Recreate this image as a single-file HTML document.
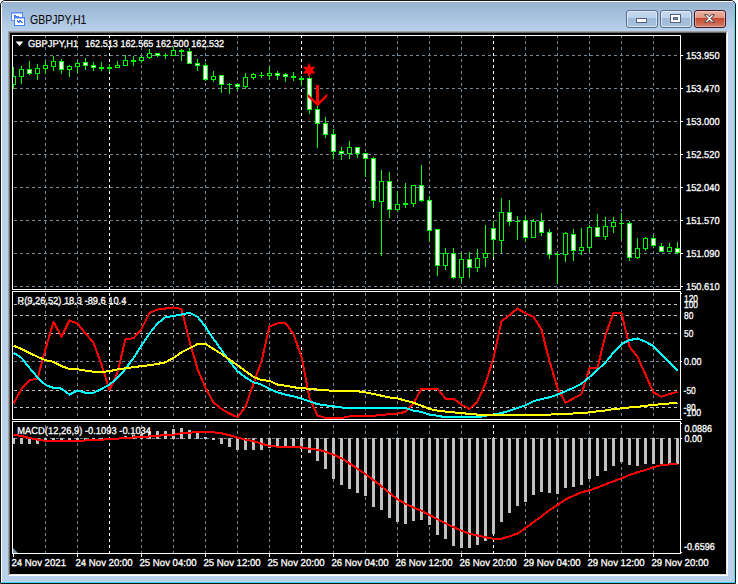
<!DOCTYPE html>
<html><head><meta charset="utf-8"><title>GBPJPY,H1</title>
<style>
html,body{margin:0;padding:0;background:#fff;width:738px;height:584px;overflow:hidden;font-family:"Liberation Sans",sans-serif}
#win{position:absolute;left:0;top:0;width:736px;height:584px;box-sizing:border-box;border:1px solid #161616;border-radius:5px 5px 0 0;background:#b9d1ea;overflow:hidden}
#hl{position:absolute;left:0;top:0;width:734px;height:582px;box-sizing:border-box;border-left:1px solid #fff;border-top:1px solid #fff;border-right:1px solid #4fd8ff;border-bottom:1px solid #3fd7ff;border-radius:4px 4px 0 0}
#cap{position:absolute;left:1px;top:1px;width:732px;height:29px;background:linear-gradient(#98b3d1 0px,#a7c1de 14px,#b9d1ea 29px)}
#title{position:absolute;left:29px;top:10px;font-size:12.5px;line-height:18px;color:#000;transform:scaleX(0.84);transform-origin:0 0;white-space:nowrap}
.btn{position:absolute;top:9px;width:32px;height:18px;box-sizing:border-box;border:1px solid #5b6f8e;border-radius:3px;background:linear-gradient(#c5d9ef 0,#bcd2eb 7px,#9fbad8 7px,#a9c3df 16px);box-shadow:inset 0 0 0 1px rgba(255,255,255,.55)}
#bclose{border-color:#471526;background:linear-gradient(#ecb2a2 0,#df9480 7px,#c3452a 7px,#d4806a 16px);box-shadow:inset 0 0 0 1px rgba(255,255,255,.35)}
#edge{position:absolute;left:7px;top:30px;width:720px;height:545px;box-sizing:border-box;border-style:solid;border-width:1px;border-color:#a0a0a0 #fff #fff #a0a0a0}
#edge2{position:absolute;left:0;top:0;width:718px;height:543px;box-sizing:border-box;border-style:solid;border-width:1px;border-color:#696969 #e3e3e3 #e3e3e3 #696969;background:#000}
</style></head><body>
<div id="win">
 <div id="hl"></div>
 <div id="cap"></div>
 <svg style="position:absolute;left:9px;top:10px" width="17" height="17" viewBox="0 0 17 17" shape-rendering="crispEdges">
  <rect x="1.5" y="1.5" width="11" height="8" fill="#fff" stroke="#5a8cff"/>
  <rect x="2" y="2" width="10" height="1" fill="#a8c4ff"/>
  <path d="M3.5 5.5h1v-1h1v1h1v1h1v-1h1" fill="none" stroke="#4a7df0"/>
  <rect x="4.5" y="6.5" width="10" height="8" fill="#fff" stroke="#4a80ff"/>
  <rect x="5" y="7" width="9" height="1" fill="#a8c4ff"/>
  <path d="M6.5 9.5h1v1h1v1h1v-2h1v1h1v1h1" fill="none" stroke="#4a7df0"/>
 </svg>
 <div id="title">GBPJPY,H1</div>
 <div class="btn" style="left:625px"><svg width="30" height="16" style="position:absolute;left:0;top:0" shape-rendering="crispEdges"><rect x="9.5" y="7.5" width="10" height="4" rx="1" fill="#fff" stroke="#54627c"/></svg></div>
 <div class="btn" style="left:659px"><svg width="30" height="16" style="position:absolute;left:0;top:0" shape-rendering="crispEdges"><rect x="9.5" y="3.5" width="10" height="8" rx="1" fill="#fff" stroke="#54627c"/><rect x="12.5" y="6.5" width="4" height="2" fill="#6f93c4" stroke="#54627c"/></svg></div>
 <div class="btn" id="bclose" style="left:693px"><svg width="30" height="16" style="position:absolute;left:0;top:0"><path d="M9.4 3.7h3l2.05 2.2 2.05-2.2h3l-3.55 3.8 3.55 3.8h-3l-2.05-2.2-2.05 2.2h-3l3.55-3.8z" fill="#fff" stroke="#4b3a44" stroke-width="1"/></svg></div>
 <div id="edge"><div id="edge2"></div></div>
</div>
<svg width="738" height="584" viewBox="0 0 738 584" style="position:absolute;left:0;top:0" font-family="Liberation Sans, sans-serif" shape-rendering="crispEdges">
<defs>
<clipPath id="c0"><rect x="13" y="36" width="667" height="253"/></clipPath>
<clipPath id="c1"><rect x="13" y="292" width="667" height="127"/></clipPath>
<clipPath id="c2"><rect x="13" y="422" width="667" height="131"/></clipPath>
</defs>
<rect x="10" y="33" width="716" height="541" fill="#000"/>
<g clip-path="url(#c0)">
<line x1="14" y1="55.5" x2="681" y2="55.5" stroke="#778899" stroke-dasharray="3 3" stroke-dashoffset="0"/>
<line x1="14" y1="88.5" x2="681" y2="88.5" stroke="#778899" stroke-dasharray="3 3" stroke-dashoffset="0"/>
<line x1="14" y1="121.5" x2="681" y2="121.5" stroke="#778899" stroke-dasharray="3 3" stroke-dashoffset="0"/>
<line x1="14" y1="154.5" x2="681" y2="154.5" stroke="#778899" stroke-dasharray="3 3" stroke-dashoffset="0"/>
<line x1="14" y1="187.5" x2="681" y2="187.5" stroke="#778899" stroke-dasharray="3 3" stroke-dashoffset="0"/>
<line x1="14" y1="220.5" x2="681" y2="220.5" stroke="#778899" stroke-dasharray="3 3" stroke-dashoffset="0"/>
<line x1="14" y1="253.5" x2="681" y2="253.5" stroke="#778899" stroke-dasharray="3 3" stroke-dashoffset="0"/>
<line x1="14" y1="286.5" x2="681" y2="286.5" stroke="#778899" stroke-dasharray="3 3" stroke-dashoffset="0"/>
<line x1="45.5" y1="35" x2="45.5" y2="290" stroke="#778899" stroke-dasharray="3 3" stroke-dashoffset="0"/>
<line x1="77.5" y1="35" x2="77.5" y2="290" stroke="#778899" stroke-dasharray="3 3" stroke-dashoffset="0"/>
<line x1="109.5" y1="35" x2="109.5" y2="290" stroke="#ffffff" stroke-dasharray="3 3" stroke-dashoffset="0"/>
<line x1="141.5" y1="35" x2="141.5" y2="290" stroke="#778899" stroke-dasharray="3 3" stroke-dashoffset="0"/>
<line x1="173.5" y1="35" x2="173.5" y2="290" stroke="#778899" stroke-dasharray="3 3" stroke-dashoffset="0"/>
<line x1="205.5" y1="35" x2="205.5" y2="290" stroke="#778899" stroke-dasharray="3 3" stroke-dashoffset="0"/>
<line x1="237.5" y1="35" x2="237.5" y2="290" stroke="#778899" stroke-dasharray="3 3" stroke-dashoffset="0"/>
<line x1="269.5" y1="35" x2="269.5" y2="290" stroke="#778899" stroke-dasharray="3 3" stroke-dashoffset="0"/>
<line x1="301.5" y1="35" x2="301.5" y2="290" stroke="#ffffff" stroke-dasharray="3 3" stroke-dashoffset="0"/>
<line x1="333.5" y1="35" x2="333.5" y2="290" stroke="#778899" stroke-dasharray="3 3" stroke-dashoffset="0"/>
<line x1="365.5" y1="35" x2="365.5" y2="290" stroke="#778899" stroke-dasharray="3 3" stroke-dashoffset="0"/>
<line x1="397.5" y1="35" x2="397.5" y2="290" stroke="#778899" stroke-dasharray="3 3" stroke-dashoffset="0"/>
<line x1="429.5" y1="35" x2="429.5" y2="290" stroke="#778899" stroke-dasharray="3 3" stroke-dashoffset="0"/>
<line x1="461.5" y1="35" x2="461.5" y2="290" stroke="#778899" stroke-dasharray="3 3" stroke-dashoffset="0"/>
<line x1="493.5" y1="35" x2="493.5" y2="290" stroke="#ffffff" stroke-dasharray="3 3" stroke-dashoffset="0"/>
<line x1="525.5" y1="35" x2="525.5" y2="290" stroke="#778899" stroke-dasharray="3 3" stroke-dashoffset="0"/>
<line x1="557.5" y1="35" x2="557.5" y2="290" stroke="#778899" stroke-dasharray="3 3" stroke-dashoffset="0"/>
<line x1="589.5" y1="35" x2="589.5" y2="290" stroke="#778899" stroke-dasharray="3 3" stroke-dashoffset="0"/>
<line x1="621.5" y1="35" x2="621.5" y2="290" stroke="#778899" stroke-dasharray="3 3" stroke-dashoffset="0"/>
<line x1="653.5" y1="35" x2="653.5" y2="290" stroke="#778899" stroke-dasharray="3 3" stroke-dashoffset="0"/>
<rect x="13" y="67" width="1" height="22" fill="#00ff00"/>
<rect x="11" y="76" width="5" height="9" fill="#00ff00"/>
<rect x="12" y="77" width="3" height="7" fill="#000"/>
<rect x="21" y="66" width="1" height="18" fill="#00ff00"/>
<rect x="19" y="69" width="5" height="8" fill="#00ff00"/>
<rect x="20" y="70" width="3" height="6" fill="#000"/>
<rect x="29" y="61" width="1" height="14" fill="#00ff00"/>
<rect x="27" y="69" width="5" height="5" fill="#00ff00"/>
<rect x="28" y="70" width="3" height="3" fill="#fff"/>
<rect x="37" y="64" width="1" height="16" fill="#00ff00"/>
<rect x="35" y="68" width="5" height="6" fill="#00ff00"/>
<rect x="36" y="69" width="3" height="4" fill="#000"/>
<rect x="45" y="61" width="1" height="13" fill="#00ff00"/>
<rect x="43" y="65" width="5" height="4" fill="#00ff00"/>
<rect x="44" y="66" width="3" height="2" fill="#000"/>
<rect x="53" y="56" width="1" height="15" fill="#00ff00"/>
<rect x="51" y="61" width="5" height="6" fill="#00ff00"/>
<rect x="52" y="62" width="3" height="4" fill="#000"/>
<rect x="61" y="59" width="1" height="15" fill="#00ff00"/>
<rect x="59" y="61" width="5" height="9" fill="#00ff00"/>
<rect x="60" y="62" width="3" height="7" fill="#fff"/>
<rect x="69" y="65" width="1" height="12" fill="#00ff00"/>
<rect x="67" y="66" width="5" height="4" fill="#00ff00"/>
<rect x="68" y="67" width="3" height="2" fill="#000"/>
<rect x="77" y="61" width="1" height="12" fill="#00ff00"/>
<rect x="75" y="63" width="5" height="4" fill="#00ff00"/>
<rect x="76" y="64" width="3" height="2" fill="#000"/>
<rect x="85" y="58" width="1" height="12" fill="#00ff00"/>
<rect x="83" y="62" width="5" height="4" fill="#00ff00"/>
<rect x="84" y="63" width="3" height="2" fill="#fff"/>
<rect x="93" y="62" width="1" height="9" fill="#00ff00"/>
<rect x="91" y="65" width="5" height="3" fill="#00ff00"/>
<rect x="92" y="66" width="3" height="1" fill="#fff"/>
<rect x="101" y="62" width="1" height="9" fill="#00ff00"/>
<rect x="99" y="67" width="5" height="2" fill="#00ff00"/>
<rect x="109" y="64" width="1" height="8" fill="#00ff00"/>
<rect x="107" y="67" width="5" height="2" fill="#00ff00"/>
<rect x="117" y="61" width="1" height="7" fill="#00ff00"/>
<rect x="115" y="65" width="5" height="3" fill="#00ff00"/>
<rect x="116" y="66" width="3" height="1" fill="#000"/>
<rect x="125" y="55" width="1" height="11" fill="#00ff00"/>
<rect x="123" y="60" width="5" height="6" fill="#00ff00"/>
<rect x="124" y="61" width="3" height="4" fill="#000"/>
<rect x="133" y="56" width="1" height="10" fill="#00ff00"/>
<rect x="131" y="60" width="5" height="2" fill="#00ff00"/>
<rect x="141" y="56" width="1" height="7" fill="#00ff00"/>
<rect x="139" y="57" width="5" height="4" fill="#00ff00"/>
<rect x="140" y="58" width="3" height="2" fill="#000"/>
<rect x="149" y="49" width="1" height="10" fill="#00ff00"/>
<rect x="147" y="53" width="5" height="5" fill="#00ff00"/>
<rect x="148" y="54" width="3" height="3" fill="#000"/>
<rect x="157" y="53" width="1" height="4" fill="#00ff00"/>
<rect x="155" y="53" width="5" height="3" fill="#00ff00"/>
<rect x="156" y="54" width="3" height="1" fill="#fff"/>
<rect x="165" y="53" width="1" height="6" fill="#00ff00"/>
<rect x="163" y="55" width="5" height="1" fill="#00ff00"/>
<rect x="173" y="47" width="1" height="9" fill="#00ff00"/>
<rect x="171" y="50" width="5" height="6" fill="#00ff00"/>
<rect x="172" y="51" width="3" height="4" fill="#000"/>
<rect x="181" y="49" width="1" height="12" fill="#00ff00"/>
<rect x="179" y="50" width="5" height="2" fill="#00ff00"/>
<rect x="189" y="48" width="1" height="16" fill="#00ff00"/>
<rect x="187" y="51" width="5" height="13" fill="#00ff00"/>
<rect x="188" y="52" width="3" height="11" fill="#fff"/>
<rect x="197" y="59" width="1" height="12" fill="#00ff00"/>
<rect x="195" y="63" width="5" height="3" fill="#00ff00"/>
<rect x="196" y="64" width="3" height="1" fill="#fff"/>
<rect x="205" y="63" width="1" height="18" fill="#00ff00"/>
<rect x="203" y="65" width="5" height="15" fill="#00ff00"/>
<rect x="204" y="66" width="3" height="13" fill="#fff"/>
<rect x="213" y="71" width="1" height="11" fill="#00ff00"/>
<rect x="211" y="76" width="5" height="4" fill="#00ff00"/>
<rect x="212" y="77" width="3" height="2" fill="#000"/>
<rect x="221" y="75" width="1" height="18" fill="#00ff00"/>
<rect x="219" y="75" width="5" height="10" fill="#00ff00"/>
<rect x="220" y="76" width="3" height="8" fill="#fff"/>
<rect x="229" y="83" width="1" height="11" fill="#00ff00"/>
<rect x="227" y="84" width="5" height="1" fill="#00ff00"/>
<rect x="237" y="83" width="1" height="7" fill="#00ff00"/>
<rect x="235" y="84" width="5" height="3" fill="#00ff00"/>
<rect x="236" y="85" width="3" height="1" fill="#fff"/>
<rect x="245" y="73" width="1" height="16" fill="#00ff00"/>
<rect x="243" y="77" width="5" height="10" fill="#00ff00"/>
<rect x="244" y="78" width="3" height="8" fill="#000"/>
<rect x="253" y="73" width="1" height="7" fill="#00ff00"/>
<rect x="251" y="74" width="5" height="4" fill="#00ff00"/>
<rect x="252" y="75" width="3" height="2" fill="#000"/>
<rect x="261" y="72" width="1" height="6" fill="#00ff00"/>
<rect x="259" y="75" width="5" height="1" fill="#00ff00"/>
<rect x="269" y="67" width="1" height="13" fill="#00ff00"/>
<rect x="267" y="73" width="5" height="3" fill="#00ff00"/>
<rect x="268" y="74" width="3" height="1" fill="#000"/>
<rect x="277" y="71" width="1" height="9" fill="#00ff00"/>
<rect x="275" y="73" width="5" height="3" fill="#00ff00"/>
<rect x="276" y="74" width="3" height="1" fill="#fff"/>
<rect x="285" y="73" width="1" height="9" fill="#00ff00"/>
<rect x="283" y="74" width="5" height="3" fill="#00ff00"/>
<rect x="284" y="75" width="3" height="1" fill="#fff"/>
<rect x="293" y="72" width="1" height="9" fill="#00ff00"/>
<rect x="291" y="76" width="5" height="2" fill="#00ff00"/>
<rect x="301" y="76" width="1" height="10" fill="#00ff00"/>
<rect x="299" y="78" width="5" height="2" fill="#00ff00"/>
<rect x="309" y="76" width="1" height="38" fill="#00ff00"/>
<rect x="307" y="78" width="5" height="32" fill="#00ff00"/>
<rect x="308" y="79" width="3" height="30" fill="#fff"/>
<rect x="317" y="106" width="1" height="42" fill="#00ff00"/>
<rect x="315" y="109" width="5" height="15" fill="#00ff00"/>
<rect x="316" y="110" width="3" height="13" fill="#fff"/>
<rect x="325" y="117" width="1" height="21" fill="#00ff00"/>
<rect x="323" y="123" width="5" height="12" fill="#00ff00"/>
<rect x="324" y="124" width="3" height="10" fill="#fff"/>
<rect x="333" y="129" width="1" height="30" fill="#00ff00"/>
<rect x="331" y="134" width="5" height="18" fill="#00ff00"/>
<rect x="332" y="135" width="3" height="16" fill="#fff"/>
<rect x="341" y="147" width="1" height="13" fill="#00ff00"/>
<rect x="339" y="151" width="5" height="3" fill="#00ff00"/>
<rect x="340" y="152" width="3" height="1" fill="#fff"/>
<rect x="349" y="141" width="1" height="18" fill="#00ff00"/>
<rect x="347" y="147" width="5" height="7" fill="#00ff00"/>
<rect x="348" y="148" width="3" height="5" fill="#000"/>
<rect x="357" y="147" width="1" height="11" fill="#00ff00"/>
<rect x="355" y="147" width="5" height="7" fill="#00ff00"/>
<rect x="356" y="148" width="3" height="5" fill="#fff"/>
<rect x="365" y="153" width="1" height="24" fill="#00ff00"/>
<rect x="363" y="153" width="5" height="6" fill="#00ff00"/>
<rect x="364" y="154" width="3" height="4" fill="#fff"/>
<rect x="373" y="157" width="1" height="51" fill="#00ff00"/>
<rect x="371" y="158" width="5" height="43" fill="#00ff00"/>
<rect x="372" y="159" width="3" height="41" fill="#fff"/>
<rect x="381" y="170" width="1" height="86" fill="#00ff00"/>
<rect x="379" y="181" width="5" height="21" fill="#00ff00"/>
<rect x="380" y="182" width="3" height="19" fill="#000"/>
<rect x="389" y="172" width="1" height="46" fill="#00ff00"/>
<rect x="387" y="181" width="5" height="29" fill="#00ff00"/>
<rect x="388" y="182" width="3" height="27" fill="#fff"/>
<rect x="397" y="191" width="1" height="21" fill="#00ff00"/>
<rect x="395" y="204" width="5" height="6" fill="#00ff00"/>
<rect x="396" y="205" width="3" height="4" fill="#000"/>
<rect x="405" y="183" width="1" height="25" fill="#00ff00"/>
<rect x="403" y="203" width="5" height="2" fill="#00ff00"/>
<rect x="413" y="185" width="1" height="22" fill="#00ff00"/>
<rect x="411" y="185" width="5" height="19" fill="#00ff00"/>
<rect x="412" y="186" width="3" height="17" fill="#000"/>
<rect x="421" y="165" width="1" height="37" fill="#00ff00"/>
<rect x="419" y="185" width="5" height="16" fill="#00ff00"/>
<rect x="420" y="186" width="3" height="14" fill="#fff"/>
<rect x="429" y="196" width="1" height="46" fill="#00ff00"/>
<rect x="427" y="200" width="5" height="31" fill="#00ff00"/>
<rect x="428" y="201" width="3" height="29" fill="#fff"/>
<rect x="437" y="229" width="1" height="47" fill="#00ff00"/>
<rect x="435" y="229" width="5" height="37" fill="#00ff00"/>
<rect x="436" y="230" width="3" height="35" fill="#fff"/>
<rect x="445" y="248" width="1" height="22" fill="#00ff00"/>
<rect x="443" y="253" width="5" height="13" fill="#00ff00"/>
<rect x="444" y="254" width="3" height="11" fill="#000"/>
<rect x="453" y="248" width="1" height="31" fill="#00ff00"/>
<rect x="451" y="253" width="5" height="25" fill="#00ff00"/>
<rect x="452" y="254" width="3" height="23" fill="#fff"/>
<rect x="461" y="253" width="1" height="29" fill="#00ff00"/>
<rect x="459" y="259" width="5" height="19" fill="#00ff00"/>
<rect x="460" y="260" width="3" height="17" fill="#000"/>
<rect x="469" y="252" width="1" height="26" fill="#00ff00"/>
<rect x="467" y="259" width="5" height="9" fill="#00ff00"/>
<rect x="468" y="260" width="3" height="7" fill="#fff"/>
<rect x="477" y="249" width="1" height="23" fill="#00ff00"/>
<rect x="475" y="258" width="5" height="10" fill="#00ff00"/>
<rect x="476" y="259" width="3" height="8" fill="#000"/>
<rect x="485" y="225" width="1" height="42" fill="#00ff00"/>
<rect x="483" y="253" width="5" height="5" fill="#00ff00"/>
<rect x="484" y="254" width="3" height="3" fill="#000"/>
<rect x="493" y="221" width="1" height="36" fill="#00ff00"/>
<rect x="491" y="228" width="5" height="12" fill="#00ff00"/>
<rect x="492" y="229" width="3" height="10" fill="#fff"/>
<rect x="501" y="198" width="1" height="55" fill="#00ff00"/>
<rect x="499" y="212" width="5" height="29" fill="#00ff00"/>
<rect x="500" y="213" width="3" height="27" fill="#000"/>
<rect x="509" y="200" width="1" height="26" fill="#00ff00"/>
<rect x="507" y="212" width="5" height="10" fill="#00ff00"/>
<rect x="508" y="213" width="3" height="8" fill="#fff"/>
<rect x="517" y="216" width="1" height="24" fill="#00ff00"/>
<rect x="515" y="221" width="5" height="1" fill="#00ff00"/>
<rect x="525" y="216" width="1" height="26" fill="#00ff00"/>
<rect x="523" y="220" width="5" height="18" fill="#00ff00"/>
<rect x="524" y="221" width="3" height="16" fill="#fff"/>
<rect x="533" y="219" width="1" height="19" fill="#00ff00"/>
<rect x="531" y="221" width="5" height="17" fill="#00ff00"/>
<rect x="532" y="222" width="3" height="15" fill="#000"/>
<rect x="541" y="213" width="1" height="23" fill="#00ff00"/>
<rect x="539" y="221" width="5" height="12" fill="#00ff00"/>
<rect x="540" y="222" width="3" height="10" fill="#fff"/>
<rect x="549" y="229" width="1" height="30" fill="#00ff00"/>
<rect x="547" y="232" width="5" height="23" fill="#00ff00"/>
<rect x="548" y="233" width="3" height="21" fill="#fff"/>
<rect x="557" y="252" width="1" height="32" fill="#00ff00"/>
<rect x="555" y="254" width="5" height="1" fill="#00ff00"/>
<rect x="565" y="232" width="1" height="30" fill="#00ff00"/>
<rect x="563" y="233" width="5" height="22" fill="#00ff00"/>
<rect x="564" y="234" width="3" height="20" fill="#000"/>
<rect x="573" y="229" width="1" height="32" fill="#00ff00"/>
<rect x="571" y="234" width="5" height="17" fill="#00ff00"/>
<rect x="572" y="235" width="3" height="15" fill="#fff"/>
<rect x="581" y="228" width="1" height="27" fill="#00ff00"/>
<rect x="579" y="247" width="5" height="4" fill="#00ff00"/>
<rect x="580" y="248" width="3" height="2" fill="#000"/>
<rect x="589" y="225" width="1" height="27" fill="#00ff00"/>
<rect x="587" y="227" width="5" height="21" fill="#00ff00"/>
<rect x="588" y="228" width="3" height="19" fill="#000"/>
<rect x="597" y="214" width="1" height="23" fill="#00ff00"/>
<rect x="595" y="227" width="5" height="10" fill="#00ff00"/>
<rect x="596" y="228" width="3" height="8" fill="#fff"/>
<rect x="605" y="217" width="1" height="23" fill="#00ff00"/>
<rect x="603" y="226" width="5" height="11" fill="#00ff00"/>
<rect x="604" y="227" width="3" height="9" fill="#000"/>
<rect x="613" y="217" width="1" height="16" fill="#00ff00"/>
<rect x="611" y="222" width="5" height="5" fill="#00ff00"/>
<rect x="612" y="223" width="3" height="3" fill="#000"/>
<rect x="621" y="213" width="1" height="26" fill="#00ff00"/>
<rect x="619" y="223" width="5" height="1" fill="#00ff00"/>
<rect x="629" y="221" width="1" height="40" fill="#00ff00"/>
<rect x="627" y="223" width="5" height="35" fill="#00ff00"/>
<rect x="628" y="224" width="3" height="33" fill="#fff"/>
<rect x="637" y="238" width="1" height="21" fill="#00ff00"/>
<rect x="635" y="248" width="5" height="10" fill="#00ff00"/>
<rect x="636" y="249" width="3" height="8" fill="#000"/>
<rect x="645" y="237" width="1" height="14" fill="#00ff00"/>
<rect x="643" y="238" width="5" height="11" fill="#00ff00"/>
<rect x="644" y="239" width="3" height="9" fill="#000"/>
<rect x="653" y="235" width="1" height="13" fill="#00ff00"/>
<rect x="651" y="238" width="5" height="8" fill="#00ff00"/>
<rect x="652" y="239" width="3" height="6" fill="#fff"/>
<rect x="661" y="243" width="1" height="9" fill="#00ff00"/>
<rect x="659" y="246" width="5" height="6" fill="#00ff00"/>
<rect x="660" y="247" width="3" height="4" fill="#fff"/>
<rect x="669" y="243" width="1" height="9" fill="#00ff00"/>
<rect x="667" y="247" width="5" height="5" fill="#00ff00"/>
<rect x="668" y="248" width="3" height="3" fill="#000"/>
<rect x="677" y="242" width="1" height="12" fill="#00ff00"/>
<rect x="675" y="248" width="5" height="5" fill="#00ff00"/>
<rect x="676" y="249" width="3" height="3" fill="#fff"/>
</g>
<g fill="#ff0000" stroke="none" shape-rendering="auto">
<polygon points="309.10,62.80 310.95,66.90 315.42,66.45 312.80,70.10 315.42,73.75 310.95,73.30 309.10,77.40 307.25,73.30 302.78,73.75 305.40,70.10 302.78,66.45 307.25,66.90"/>
<rect x="316" y="85" width="3" height="20"/>
<polygon points="308,93.9 317.6,102.7 327.3,93.4 327.3,96.7 317.6,106.3 308,97.3"/>
</g>
<g clip-path="url(#c1)">
<line x1="45.5" y1="291" x2="45.5" y2="420" stroke="#778899" stroke-dasharray="3 3" stroke-dashoffset="4"/>
<line x1="77.5" y1="291" x2="77.5" y2="420" stroke="#778899" stroke-dasharray="3 3" stroke-dashoffset="4"/>
<line x1="109.5" y1="291" x2="109.5" y2="420" stroke="#ffffff" stroke-dasharray="3 3" stroke-dashoffset="4"/>
<line x1="141.5" y1="291" x2="141.5" y2="420" stroke="#778899" stroke-dasharray="3 3" stroke-dashoffset="4"/>
<line x1="173.5" y1="291" x2="173.5" y2="420" stroke="#778899" stroke-dasharray="3 3" stroke-dashoffset="4"/>
<line x1="205.5" y1="291" x2="205.5" y2="420" stroke="#778899" stroke-dasharray="3 3" stroke-dashoffset="4"/>
<line x1="237.5" y1="291" x2="237.5" y2="420" stroke="#778899" stroke-dasharray="3 3" stroke-dashoffset="4"/>
<line x1="269.5" y1="291" x2="269.5" y2="420" stroke="#778899" stroke-dasharray="3 3" stroke-dashoffset="4"/>
<line x1="301.5" y1="291" x2="301.5" y2="420" stroke="#ffffff" stroke-dasharray="3 3" stroke-dashoffset="4"/>
<line x1="333.5" y1="291" x2="333.5" y2="420" stroke="#778899" stroke-dasharray="3 3" stroke-dashoffset="4"/>
<line x1="365.5" y1="291" x2="365.5" y2="420" stroke="#778899" stroke-dasharray="3 3" stroke-dashoffset="4"/>
<line x1="397.5" y1="291" x2="397.5" y2="420" stroke="#778899" stroke-dasharray="3 3" stroke-dashoffset="4"/>
<line x1="429.5" y1="291" x2="429.5" y2="420" stroke="#778899" stroke-dasharray="3 3" stroke-dashoffset="4"/>
<line x1="461.5" y1="291" x2="461.5" y2="420" stroke="#778899" stroke-dasharray="3 3" stroke-dashoffset="4"/>
<line x1="493.5" y1="291" x2="493.5" y2="420" stroke="#ffffff" stroke-dasharray="3 3" stroke-dashoffset="4"/>
<line x1="525.5" y1="291" x2="525.5" y2="420" stroke="#778899" stroke-dasharray="3 3" stroke-dashoffset="4"/>
<line x1="557.5" y1="291" x2="557.5" y2="420" stroke="#778899" stroke-dasharray="3 3" stroke-dashoffset="4"/>
<line x1="589.5" y1="291" x2="589.5" y2="420" stroke="#778899" stroke-dasharray="3 3" stroke-dashoffset="4"/>
<line x1="621.5" y1="291" x2="621.5" y2="420" stroke="#778899" stroke-dasharray="3 3" stroke-dashoffset="4"/>
<line x1="653.5" y1="291" x2="653.5" y2="420" stroke="#778899" stroke-dasharray="3 3" stroke-dashoffset="4"/>
<line x1="14" y1="304.5" x2="681" y2="304.5" stroke="#c0c0c0" stroke-dasharray="3 3" stroke-dashoffset="0"/>
<line x1="14" y1="315.5" x2="681" y2="315.5" stroke="#c0c0c0" stroke-dasharray="3 3" stroke-dashoffset="0"/>
<line x1="14" y1="333.5" x2="681" y2="333.5" stroke="#c0c0c0" stroke-dasharray="3 3" stroke-dashoffset="0"/>
<line x1="14" y1="361.5" x2="681" y2="361.5" stroke="#778899" stroke-dasharray="3 3" stroke-dashoffset="0"/>
<line x1="14" y1="390.5" x2="681" y2="390.5" stroke="#c0c0c0" stroke-dasharray="3 3" stroke-dashoffset="0"/>
<line x1="14" y1="407.5" x2="681" y2="407.5" stroke="#c0c0c0" stroke-dasharray="3 3" stroke-dashoffset="0"/>
<polyline points="13.5,403.5 21.5,389 29.5,380.1 37.5,378.6 45.5,349 53.5,321.8 61.5,336.7 69.5,320.5 77.5,323.4 85.5,333.4 93.5,342.7 101.5,364.5 109.5,390.1 117.5,372.3 125.5,339 133.5,338.3 141.5,328.9 149.5,312.9 157.5,309.6 165.5,308.5 173.5,307.4 181.5,308.9 189.5,341.2 197.5,369 205.5,387.9 213.5,402.4 221.5,409 229.5,413.5 237.5,417.3 245.5,406.8 253.5,383.5 261.5,361.2 269.5,326.3 277.5,323.4 285.5,322.9 293.5,334.1 301.5,356.8 309.5,397.9 317.5,415.5 325.5,418 333.5,418 341.5,418 349.5,416.4 357.5,416.4 365.5,415.7 373.5,415.7 381.5,415 389.5,414.2 397.5,413.5 405.5,411.9 413.5,403.5 421.5,388.6 429.5,388.6 437.5,388.6 445.5,398.6 453.5,398.6 461.5,404.6 469.5,409 477.5,401.3 485.5,383.5 493.5,357.9 501.5,321.2 509.5,315.1 517.5,308.5 525.5,313.4 533.5,316.7 541.5,329.6 549.5,361.2 557.5,387.9 565.5,402.8 573.5,398.4 581.5,394.3 589.5,367.9 597.5,367.9 605.5,335 613.5,312.9 621.5,312.9 629.5,346.7 637.5,356.8 645.5,374.6 653.5,392.4 661.5,396.8 669.5,394.1 677.5,391.7" fill="none" stroke="#ff0000" stroke-width="2" stroke-linejoin="round"/>
<polyline points="13.5,352.7 21.5,357.9 29.5,367.9 37.5,377.4 45.5,385 53.5,387.9 61.5,388.6 69.5,394.6 77.5,390.6 85.5,392.8 93.5,392.8 101.5,389 109.5,384.6 117.5,377.9 125.5,369 133.5,357.9 141.5,345.6 149.5,333.4 157.5,323.4 165.5,317.1 173.5,316 181.5,314.5 189.5,312.7 197.5,316.7 205.5,326.7 213.5,339 221.5,350.1 229.5,361.2 237.5,371.2 245.5,377.4 253.5,382.3 261.5,384.6 269.5,389 277.5,392.4 285.5,394.6 293.5,396.4 301.5,398.6 309.5,401.3 317.5,404.2 325.5,405.3 333.5,406.2 341.5,407.5 349.5,407.5 357.5,407.5 365.5,407.5 373.5,407.5 381.5,407.5 389.5,407.5 397.5,407.5 405.5,407.9 413.5,410.6 421.5,411.9 429.5,414.6 437.5,415.7 445.5,417.3 453.5,417.3 461.5,417.3 469.5,417.3 477.5,417.3 485.5,415.7 493.5,414.6 501.5,413.1 509.5,410.8 517.5,407.9 525.5,405.3 533.5,401.3 541.5,399 549.5,397.3 557.5,394.6 565.5,391.2 573.5,387.9 581.5,383.7 589.5,377 597.5,369.9 605.5,362.3 613.5,352.7 621.5,344.1 629.5,340.1 637.5,338.5 645.5,341.8 653.5,346.1 661.5,354.1 669.5,362.3 677.5,370.8" fill="none" stroke="#00ffff" stroke-width="2" stroke-linejoin="round"/>
<polyline points="13.5,345.6 21.5,349 29.5,353 37.5,356.8 45.5,360.1 53.5,361.9 61.5,366.1 69.5,369 77.5,369.2 85.5,370.6 93.5,371.7 101.5,371.9 109.5,371.2 117.5,369.4 125.5,368.3 133.5,367.2 141.5,366.1 149.5,365.2 157.5,363.9 165.5,362.3 173.5,357.9 181.5,352.3 189.5,348.3 197.5,344.1 205.5,343.8 213.5,349 221.5,353.9 229.5,359.6 237.5,365.2 245.5,371.2 253.5,376.8 261.5,380.1 269.5,380.8 277.5,384.6 285.5,385.7 293.5,387.2 301.5,388.4 309.5,388.6 317.5,389.6 325.5,390.3 333.5,390.8 341.5,390.8 349.5,390.8 357.5,391.2 365.5,392.4 373.5,393.9 381.5,395.7 389.5,397.5 397.5,398.4 405.5,400.6 413.5,402.8 421.5,405.7 429.5,409 437.5,410.6 445.5,411.6 453.5,412.4 461.5,413.1 469.5,413.9 477.5,414.6 485.5,415.1 493.5,415.3 501.5,415.3 509.5,415.3 517.5,415.3 525.5,415.3 533.5,415.3 541.5,415.3 549.5,414.6 557.5,414.2 565.5,413.9 573.5,413.5 581.5,413.1 589.5,412.4 597.5,411.3 605.5,410.5 613.5,409 621.5,408.4 629.5,407.5 637.5,406.8 645.5,405.7 653.5,405 661.5,404.2 669.5,403.5 677.5,402.8" fill="none" stroke="#ffff00" stroke-width="2" stroke-linejoin="round"/>
</g>
<g clip-path="url(#c2)">
<line x1="45.5" y1="421" x2="45.5" y2="554" stroke="#778899" stroke-dasharray="3 3" stroke-dashoffset="2"/>
<line x1="77.5" y1="421" x2="77.5" y2="554" stroke="#778899" stroke-dasharray="3 3" stroke-dashoffset="2"/>
<line x1="109.5" y1="421" x2="109.5" y2="554" stroke="#ffffff" stroke-dasharray="3 3" stroke-dashoffset="2"/>
<line x1="141.5" y1="421" x2="141.5" y2="554" stroke="#778899" stroke-dasharray="3 3" stroke-dashoffset="2"/>
<line x1="173.5" y1="421" x2="173.5" y2="554" stroke="#778899" stroke-dasharray="3 3" stroke-dashoffset="2"/>
<line x1="205.5" y1="421" x2="205.5" y2="554" stroke="#778899" stroke-dasharray="3 3" stroke-dashoffset="2"/>
<line x1="237.5" y1="421" x2="237.5" y2="554" stroke="#778899" stroke-dasharray="3 3" stroke-dashoffset="2"/>
<line x1="269.5" y1="421" x2="269.5" y2="554" stroke="#778899" stroke-dasharray="3 3" stroke-dashoffset="2"/>
<line x1="301.5" y1="421" x2="301.5" y2="554" stroke="#ffffff" stroke-dasharray="3 3" stroke-dashoffset="2"/>
<line x1="333.5" y1="421" x2="333.5" y2="554" stroke="#778899" stroke-dasharray="3 3" stroke-dashoffset="2"/>
<line x1="365.5" y1="421" x2="365.5" y2="554" stroke="#778899" stroke-dasharray="3 3" stroke-dashoffset="2"/>
<line x1="397.5" y1="421" x2="397.5" y2="554" stroke="#778899" stroke-dasharray="3 3" stroke-dashoffset="2"/>
<line x1="429.5" y1="421" x2="429.5" y2="554" stroke="#778899" stroke-dasharray="3 3" stroke-dashoffset="2"/>
<line x1="461.5" y1="421" x2="461.5" y2="554" stroke="#778899" stroke-dasharray="3 3" stroke-dashoffset="2"/>
<line x1="493.5" y1="421" x2="493.5" y2="554" stroke="#ffffff" stroke-dasharray="3 3" stroke-dashoffset="2"/>
<line x1="525.5" y1="421" x2="525.5" y2="554" stroke="#778899" stroke-dasharray="3 3" stroke-dashoffset="2"/>
<line x1="557.5" y1="421" x2="557.5" y2="554" stroke="#778899" stroke-dasharray="3 3" stroke-dashoffset="2"/>
<line x1="589.5" y1="421" x2="589.5" y2="554" stroke="#778899" stroke-dasharray="3 3" stroke-dashoffset="2"/>
<line x1="621.5" y1="421" x2="621.5" y2="554" stroke="#778899" stroke-dasharray="3 3" stroke-dashoffset="2"/>
<line x1="653.5" y1="421" x2="653.5" y2="554" stroke="#778899" stroke-dasharray="3 3" stroke-dashoffset="2"/>
<line x1="14" y1="438.5" x2="681" y2="438.5" stroke="#778899" stroke-dasharray="3 3" stroke-dashoffset="0"/>
<rect x="12" y="438" width="3" height="6" fill="#c0c0c0"/>
<rect x="20" y="438" width="3" height="6" fill="#c0c0c0"/>
<rect x="28" y="438" width="3" height="6" fill="#c0c0c0"/>
<rect x="36" y="438" width="3" height="6" fill="#c0c0c0"/>
<rect x="44" y="438" width="3" height="4" fill="#c0c0c0"/>
<rect x="52" y="438" width="3" height="2" fill="#c0c0c0"/>
<rect x="60" y="438" width="3" height="2" fill="#c0c0c0"/>
<rect x="68" y="438" width="3" height="2" fill="#c0c0c0"/>
<rect x="76" y="438" width="3" height="2" fill="#c0c0c0"/>
<rect x="84" y="438" width="3" height="2" fill="#c0c0c0"/>
<rect x="92" y="438" width="3" height="2" fill="#c0c0c0"/>
<rect x="100" y="438" width="3" height="2" fill="#c0c0c0"/>
<rect x="108" y="438" width="3" height="1" fill="#c0c0c0"/>
<rect x="116" y="438" width="3" height="1" fill="#c0c0c0"/>
<rect x="124" y="436" width="3" height="3" fill="#c0c0c0"/>
<rect x="132" y="435" width="3" height="4" fill="#c0c0c0"/>
<rect x="140" y="434" width="3" height="5" fill="#c0c0c0"/>
<rect x="148" y="432" width="3" height="7" fill="#c0c0c0"/>
<rect x="156" y="431" width="3" height="8" fill="#c0c0c0"/>
<rect x="164" y="431" width="3" height="8" fill="#c0c0c0"/>
<rect x="172" y="429" width="3" height="10" fill="#c0c0c0"/>
<rect x="180" y="428" width="3" height="11" fill="#c0c0c0"/>
<rect x="188" y="430" width="3" height="9" fill="#c0c0c0"/>
<rect x="196" y="432" width="3" height="7" fill="#c0c0c0"/>
<rect x="204" y="437" width="3" height="2" fill="#c0c0c0"/>
<rect x="212" y="438" width="3" height="2" fill="#c0c0c0"/>
<rect x="220" y="438" width="3" height="6" fill="#c0c0c0"/>
<rect x="228" y="438" width="3" height="9" fill="#c0c0c0"/>
<rect x="236" y="438" width="3" height="12" fill="#c0c0c0"/>
<rect x="244" y="438" width="3" height="12" fill="#c0c0c0"/>
<rect x="252" y="438" width="3" height="12" fill="#c0c0c0"/>
<rect x="260" y="438" width="3" height="12" fill="#c0c0c0"/>
<rect x="268" y="438" width="3" height="10" fill="#c0c0c0"/>
<rect x="276" y="438" width="3" height="9" fill="#c0c0c0"/>
<rect x="284" y="438" width="3" height="9" fill="#c0c0c0"/>
<rect x="292" y="438" width="3" height="9" fill="#c0c0c0"/>
<rect x="300" y="438" width="3" height="11" fill="#c0c0c0"/>
<rect x="308" y="438" width="3" height="15" fill="#c0c0c0"/>
<rect x="316" y="438" width="3" height="23" fill="#c0c0c0"/>
<rect x="324" y="438" width="3" height="31" fill="#c0c0c0"/>
<rect x="332" y="438" width="3" height="41" fill="#c0c0c0"/>
<rect x="340" y="438" width="3" height="47" fill="#c0c0c0"/>
<rect x="348" y="438" width="3" height="51" fill="#c0c0c0"/>
<rect x="356" y="438" width="3" height="55" fill="#c0c0c0"/>
<rect x="364" y="438" width="3" height="58" fill="#c0c0c0"/>
<rect x="372" y="438" width="3" height="69" fill="#c0c0c0"/>
<rect x="380" y="438" width="3" height="72" fill="#c0c0c0"/>
<rect x="388" y="438" width="3" height="80" fill="#c0c0c0"/>
<rect x="396" y="438" width="3" height="84" fill="#c0c0c0"/>
<rect x="404" y="438" width="3" height="86" fill="#c0c0c0"/>
<rect x="412" y="438" width="3" height="83" fill="#c0c0c0"/>
<rect x="420" y="438" width="3" height="82" fill="#c0c0c0"/>
<rect x="428" y="438" width="3" height="87" fill="#c0c0c0"/>
<rect x="436" y="438" width="3" height="97" fill="#c0c0c0"/>
<rect x="444" y="438" width="3" height="101" fill="#c0c0c0"/>
<rect x="452" y="438" width="3" height="108" fill="#c0c0c0"/>
<rect x="460" y="438" width="3" height="110" fill="#c0c0c0"/>
<rect x="468" y="438" width="3" height="110" fill="#c0c0c0"/>
<rect x="476" y="438" width="3" height="107" fill="#c0c0c0"/>
<rect x="484" y="438" width="3" height="103" fill="#c0c0c0"/>
<rect x="492" y="438" width="3" height="96" fill="#c0c0c0"/>
<rect x="500" y="438" width="3" height="84" fill="#c0c0c0"/>
<rect x="508" y="438" width="3" height="75" fill="#c0c0c0"/>
<rect x="516" y="438" width="3" height="68" fill="#c0c0c0"/>
<rect x="524" y="438" width="3" height="64" fill="#c0c0c0"/>
<rect x="532" y="438" width="3" height="57" fill="#c0c0c0"/>
<rect x="540" y="438" width="3" height="54" fill="#c0c0c0"/>
<rect x="548" y="438" width="3" height="55" fill="#c0c0c0"/>
<rect x="556" y="438" width="3" height="56" fill="#c0c0c0"/>
<rect x="564" y="438" width="3" height="50" fill="#c0c0c0"/>
<rect x="572" y="438" width="3" height="49" fill="#c0c0c0"/>
<rect x="580" y="438" width="3" height="47" fill="#c0c0c0"/>
<rect x="588" y="438" width="3" height="41" fill="#c0c0c0"/>
<rect x="596" y="438" width="3" height="38" fill="#c0c0c0"/>
<rect x="604" y="438" width="3" height="33" fill="#c0c0c0"/>
<rect x="612" y="438" width="3" height="28" fill="#c0c0c0"/>
<rect x="620" y="438" width="3" height="24" fill="#c0c0c0"/>
<rect x="628" y="438" width="3" height="27" fill="#c0c0c0"/>
<rect x="636" y="438" width="3" height="28" fill="#c0c0c0"/>
<rect x="644" y="438" width="3" height="26" fill="#c0c0c0"/>
<rect x="652" y="438" width="3" height="26" fill="#c0c0c0"/>
<rect x="660" y="438" width="3" height="26" fill="#c0c0c0"/>
<rect x="668" y="438" width="3" height="26" fill="#c0c0c0"/>
<rect x="676" y="438" width="3" height="26" fill="#c0c0c0"/>
<polyline points="13.5,435 21.5,436 29.5,438 37.5,439.5 45.5,441 53.5,441 61.5,441 69.5,441 77.5,441 85.5,440.5 93.5,440 101.5,439.8 109.5,438.8 117.5,438.7 125.5,437.8 133.5,437.5 141.5,436.8 149.5,436.5 157.5,435.7 165.5,435.2 173.5,434.9 181.5,433.2 189.5,432.7 197.5,432 205.5,432 213.5,432.3 221.5,433.3 229.5,435.2 237.5,437.7 245.5,439.6 253.5,441.2 261.5,443.7 269.5,445.8 277.5,446.7 285.5,446.7 293.5,446.7 301.5,447.5 309.5,448.7 317.5,449.7 325.5,451.7 333.5,454.7 341.5,458.3 349.5,463.3 357.5,468.7 365.5,474.2 373.5,480 381.5,486.3 389.5,493 397.5,499.2 405.5,503.8 413.5,507.5 421.5,510.8 429.5,515 437.5,519.2 445.5,523.3 453.5,527.1 461.5,530.6 469.5,533.6 477.5,535.5 485.5,537.3 493.5,538.8 501.5,538.8 509.5,536.3 517.5,533.5 525.5,528 533.5,522.2 541.5,516.3 549.5,510.2 557.5,505 565.5,499.4 573.5,495.8 581.5,492.2 589.5,490.3 597.5,487.5 605.5,484.2 613.5,481.3 621.5,478.3 629.5,475 637.5,472.2 645.5,470 653.5,467.2 661.5,465 669.5,464.5 677.5,463.8" fill="none" stroke="#ff0000" stroke-width="2" stroke-linejoin="round"/>
</g>
<rect x="12" y="35" width="669" height="1" fill="#ffffff"/>
<rect x="12" y="289" width="669" height="1" fill="#ffffff"/>
<rect x="12" y="291" width="669" height="1" fill="#ffffff"/>
<rect x="12" y="419" width="669" height="1" fill="#ffffff"/>
<rect x="12" y="421" width="669" height="1" fill="#ffffff"/>
<rect x="12" y="553" width="669" height="1" fill="#ffffff"/>
<rect x="681" y="293" width="1" height="1" fill="#ffffff"/>
<rect x="681" y="419" width="1" height="1" fill="#ffffff"/>
<rect x="681" y="423" width="1" height="1" fill="#ffffff"/>
<rect x="681" y="552" width="1" height="1" fill="#ffffff"/>
<rect x="12" y="35" width="1" height="519" fill="#ffffff"/>
<rect x="680" y="35" width="1" height="519" fill="#ffffff"/>
<rect x="12" y="290" width="669" height="1" fill="#000"/>
<rect x="12" y="420" width="669" height="1" fill="#000"/>
<polygon points="13,548 13,553 18,553" fill="#7a90b0" shape-rendering="auto"/>
<rect x="681" y="55" width="2" height="1" fill="#ffffff"/>
<text transform="translate(686,59) scale(0.928,1)" font-size="10" fill="#fff" text-anchor="start" text-rendering="geometricPrecision" stroke="#fff" stroke-width="0.3">153.950</text>
<rect x="681" y="88" width="2" height="1" fill="#ffffff"/>
<text transform="translate(686,92) scale(0.928,1)" font-size="10" fill="#fff" text-anchor="start" text-rendering="geometricPrecision" stroke="#fff" stroke-width="0.3">153.470</text>
<rect x="681" y="121" width="2" height="1" fill="#ffffff"/>
<text transform="translate(686,125) scale(0.928,1)" font-size="10" fill="#fff" text-anchor="start" text-rendering="geometricPrecision" stroke="#fff" stroke-width="0.3">153.000</text>
<rect x="681" y="154" width="2" height="1" fill="#ffffff"/>
<text transform="translate(686,158) scale(0.928,1)" font-size="10" fill="#fff" text-anchor="start" text-rendering="geometricPrecision" stroke="#fff" stroke-width="0.3">152.520</text>
<rect x="681" y="187" width="2" height="1" fill="#ffffff"/>
<text transform="translate(686,191) scale(0.928,1)" font-size="10" fill="#fff" text-anchor="start" text-rendering="geometricPrecision" stroke="#fff" stroke-width="0.3">152.040</text>
<rect x="681" y="220" width="2" height="1" fill="#ffffff"/>
<text transform="translate(686,224) scale(0.928,1)" font-size="10" fill="#fff" text-anchor="start" text-rendering="geometricPrecision" stroke="#fff" stroke-width="0.3">151.570</text>
<rect x="681" y="253" width="2" height="1" fill="#ffffff"/>
<text transform="translate(686,257) scale(0.928,1)" font-size="10" fill="#fff" text-anchor="start" text-rendering="geometricPrecision" stroke="#fff" stroke-width="0.3">151.090</text>
<rect x="681" y="286" width="2" height="1" fill="#ffffff"/>
<text transform="translate(686,290) scale(0.928,1)" font-size="10" fill="#fff" text-anchor="start" text-rendering="geometricPrecision" stroke="#fff" stroke-width="0.3">150.610</text>
<text transform="translate(684,302) scale(0.84,1)" font-size="10" fill="#fff" text-anchor="start" text-rendering="geometricPrecision" stroke="#fff" stroke-width="0.3">120</text>
<text transform="translate(684,308) scale(0.84,1)" font-size="10" fill="#fff" text-anchor="start" text-rendering="geometricPrecision" stroke="#fff" stroke-width="0.3">100</text>
<text transform="translate(684,319) scale(0.84,1)" font-size="10" fill="#fff" text-anchor="start" text-rendering="geometricPrecision" stroke="#fff" stroke-width="0.3">80</text>
<text transform="translate(684,337) scale(0.84,1)" font-size="10" fill="#fff" text-anchor="start" text-rendering="geometricPrecision" stroke="#fff" stroke-width="0.3">50</text>
<text transform="translate(684,365) scale(0.902,1)" font-size="10" fill="#fff" text-anchor="start" text-rendering="geometricPrecision" stroke="#fff" stroke-width="0.3">0.00</text>
<text transform="translate(683.6,394) scale(0.84,1)" font-size="10" fill="#fff" text-anchor="start" text-rendering="geometricPrecision" stroke="#fff" stroke-width="0.3">-50</text>
<text transform="translate(683.6,411) scale(0.84,1)" font-size="10" fill="#fff" text-anchor="start" text-rendering="geometricPrecision" stroke="#fff" stroke-width="0.3">-80</text>
<text transform="translate(683.6,416) scale(0.881,1)" font-size="10" fill="#fff" text-anchor="start" text-rendering="geometricPrecision" stroke="#fff" stroke-width="0.3">-100</text>
<rect x="681" y="361" width="1" height="1" fill="#ffffff"/>
<text transform="translate(684.5,432) scale(0.9,1)" font-size="10" fill="#fff" text-anchor="start" text-rendering="geometricPrecision" stroke="#fff" stroke-width="0.3">0.0886</text>
<text transform="translate(684.5,442) scale(0.902,1)" font-size="10" fill="#fff" text-anchor="start" text-rendering="geometricPrecision" stroke="#fff" stroke-width="0.3">0.00</text>
<rect x="681" y="438" width="1" height="1" fill="#ffffff"/>
<text transform="translate(684,550) scale(0.91,1)" font-size="10" fill="#fff" text-anchor="start" text-rendering="geometricPrecision" stroke="#fff" stroke-width="0.3">-0.6596</text>
<rect x="13" y="554" width="1" height="3" fill="#ffffff"/>
<text transform="translate(11.5,566) scale(0.961,1)" font-size="10" fill="#fff" text-anchor="start" text-rendering="geometricPrecision" stroke="#fff" stroke-width="0.3">24 Nov 2021</text>
<rect x="77" y="554" width="1" height="3" fill="#ffffff"/>
<text transform="translate(75.5,566) scale(0.961,1)" font-size="10" fill="#fff" text-anchor="start" text-rendering="geometricPrecision" stroke="#fff" stroke-width="0.3">24 Nov 20:00</text>
<rect x="141" y="554" width="1" height="3" fill="#ffffff"/>
<text transform="translate(139.5,566) scale(0.961,1)" font-size="10" fill="#fff" text-anchor="start" text-rendering="geometricPrecision" stroke="#fff" stroke-width="0.3">25 Nov 04:00</text>
<rect x="205" y="554" width="1" height="3" fill="#ffffff"/>
<text transform="translate(203.5,566) scale(0.961,1)" font-size="10" fill="#fff" text-anchor="start" text-rendering="geometricPrecision" stroke="#fff" stroke-width="0.3">25 Nov 12:00</text>
<rect x="269" y="554" width="1" height="3" fill="#ffffff"/>
<text transform="translate(267.5,566) scale(0.961,1)" font-size="10" fill="#fff" text-anchor="start" text-rendering="geometricPrecision" stroke="#fff" stroke-width="0.3">25 Nov 20:00</text>
<rect x="333" y="554" width="1" height="3" fill="#ffffff"/>
<text transform="translate(331.5,566) scale(0.961,1)" font-size="10" fill="#fff" text-anchor="start" text-rendering="geometricPrecision" stroke="#fff" stroke-width="0.3">26 Nov 04:00</text>
<rect x="397" y="554" width="1" height="3" fill="#ffffff"/>
<text transform="translate(395.5,566) scale(0.961,1)" font-size="10" fill="#fff" text-anchor="start" text-rendering="geometricPrecision" stroke="#fff" stroke-width="0.3">26 Nov 12:00</text>
<rect x="461" y="554" width="1" height="3" fill="#ffffff"/>
<text transform="translate(459.5,566) scale(0.961,1)" font-size="10" fill="#fff" text-anchor="start" text-rendering="geometricPrecision" stroke="#fff" stroke-width="0.3">26 Nov 20:00</text>
<rect x="525" y="554" width="1" height="3" fill="#ffffff"/>
<text transform="translate(523.5,566) scale(0.961,1)" font-size="10" fill="#fff" text-anchor="start" text-rendering="geometricPrecision" stroke="#fff" stroke-width="0.3">29 Nov 04:00</text>
<rect x="589" y="554" width="1" height="3" fill="#ffffff"/>
<text transform="translate(587.5,566) scale(0.961,1)" font-size="10" fill="#fff" text-anchor="start" text-rendering="geometricPrecision" stroke="#fff" stroke-width="0.3">29 Nov 12:00</text>
<rect x="653" y="554" width="1" height="3" fill="#ffffff"/>
<text transform="translate(651.5,566) scale(0.961,1)" font-size="10" fill="#fff" text-anchor="start" text-rendering="geometricPrecision" stroke="#fff" stroke-width="0.3">29 Nov 20:00</text>
<polygon points="15.6,41.6 23.4,41.6 19.5,46" fill="#fff" shape-rendering="auto"/>
<text transform="translate(28,47) scale(0.935,1)" font-size="10" fill="#fff" text-anchor="start" text-rendering="geometricPrecision" stroke="#fff" stroke-width="0.3">GBPJPY,H1</text>
<text transform="translate(85.0,47) scale(0.91,1)" font-size="10" fill="#fff" text-anchor="start" text-rendering="geometricPrecision" stroke="#fff" stroke-width="0.3">162.513 162.565 162.500 162.532</text>
<text transform="translate(17.5,304) scale(0.928,1)" font-size="10" fill="#fff" text-anchor="start" text-rendering="geometricPrecision" stroke="#fff" stroke-width="0.3">R(9,26,52) 18.3 -89.6 10.4</text>
<text transform="translate(17.3,434) scale(0.936,1)" font-size="10" fill="#fff" text-anchor="start" text-rendering="geometricPrecision" stroke="#fff" stroke-width="0.3">MACD(12,26,9) -0.1093 -0.1034</text>
</svg>
</body></html>
